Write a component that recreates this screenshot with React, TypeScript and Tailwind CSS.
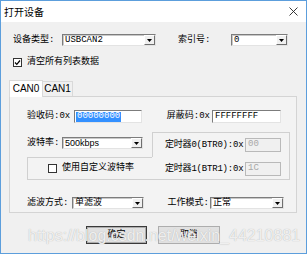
import React from "react";

interface ComboProps {
  value: string;
  className: string;
  sans?: boolean;
}

function DropArrow() {
  return (
    <span className="w-[11px] shrink-0 bg-[#f0f0f0] border border-t-white border-l-white border-r-[#6f6f6f] border-b-[#6f6f6f] flex items-center justify-center">
      <svg width="5" height="3" viewBox="0 0 5 3">
        <path d="M0 0H5L2.5 3Z" fill="#000" />
      </svg>
    </span>
  );
}

function Combo({ value, className, sans }: ComboProps) {
  return (
    <div
      className={`h-[12px] shrink-0 bg-white border border-t-[#7c7c7c] border-l-[#7c7c7c] border-r-[#e3e3e3] border-b-[#e3e3e3] shadow-[inset_1px_1px_0_#c8c8c8] flex items-stretch ${className}`}
    >
      <span
        className={`flex-1 flex items-center pl-[2px] whitespace-nowrap ${
          sans ? "font-['Liberation_Sans','Noto_Sans_CJK_SC',sans-serif] text-[9px]" : ""
        }`}
      >
        {value}
      </span>
      <DropArrow />
    </div>
  );
}

function Edit({ value, className, selected }: { value: string; className: string; selected?: boolean }) {
  return (
    <div
      className={`h-[13px] shrink-0 bg-white border border-t-[#7c7c7c] border-l-[#7c7c7c] border-r-[#e3e3e3] border-b-[#e3e3e3] flex items-center pl-px ${className}`}
    >
      {selected ? (
        <span className="bg-[#3390ff] text-white h-[10px] flex items-center px-px">{value}</span>
      ) : (
        <span className="px-px">{value}</span>
      )}
    </div>
  );
}

function DisabledEdit({ value }: { value: string }) {
  return (
    <div className="w-[36px] h-[14px] shrink-0 bg-[#f0f0f0] border border-[#b9b9b9] text-[#a8a8a8] pl-[2px] pt-px">
      {value}
    </div>
  );
}

function CheckBox({ checked }: { checked?: boolean }) {
  return (
    <span className="w-[9px] h-[9px] shrink-0 bg-white border border-[#333] flex items-center justify-center">
      {checked && (
        <svg width="7" height="7" viewBox="0 0 7 7">
          <path d="M1 3.5L2.8 5.3L6 1.5" fill="none" stroke="#000" strokeWidth="1.2" />
        </svg>
      )}
    </span>
  );
}

export default function App() {
  return (
    <div className="relative w-[307px] h-[254px] border border-[#5c9edc] bg-[#f0f0f0] flex flex-col overflow-hidden text-black text-[9px] leading-none font-['Liberation_Mono','Noto_Sans_CJK_SC',monospace]">
      {/* title bar */}
      <div className="h-[21px] shrink-0 bg-white flex items-center justify-between pl-[3px] pr-[8px]">
        <span className="font-['Noto_Sans_CJK_SC',sans-serif] text-[10px]">打开设备</span>
        <svg width="9" height="9" viewBox="0 0 9 9">
          <path d="M0.5 0.5L8.5 8.5M8.5 0.5L0.5 8.5" stroke="#222" strokeWidth="0.9" />
        </svg>
      </div>

      {/* device row */}
      <div className="mt-[12px] h-[12px] flex items-center pl-[12px]">
        <span className="w-[49px]">设备类型:</span>
        <Combo value="USBCAN2" className="w-[94px]" />
        <span className="ml-[22px] w-[53px]">索引号:</span>
        <Combo value="0" className="w-[57px]" />
      </div>

      <div className="mt-[12px] h-[9px] flex items-center gap-[5px] pl-[12px]">
        <CheckBox checked />
        <span>清空所有列表数据</span>
      </div>

      {/* tabs */}
      <div className="mt-[13px] h-[17px] flex items-end pl-[8px] font-['Liberation_Sans',sans-serif] text-[10px]">
        <div className="relative z-10 w-[34px] h-[17px] bg-white border border-b-0 border-[#d9d9d9] flex items-center justify-center">
          CAN0
        </div>
        <div className="w-[30px] h-[15px] mb-px bg-[#f0f0f0] border-t border-r border-[#d9d9d9] flex items-center justify-center">
          CAN1
        </div>
      </div>

      {/* tab page */}
      <div className="-mt-px ml-[8px] w-[288px] h-[117px] border border-[#d4d4d4] bg-[#f3f3f3] flex flex-col">
        <div className="mt-[13px] h-[13px] flex items-center justify-between pl-[17px] pr-[15px]">
          <div className="flex items-center">
            <span className="w-[47px]">验收码:0x</span>
            <Edit value="00000000" className="w-[68px]" selected />
          </div>
          <div className="flex items-center gap-[2px]">
            <span>屏蔽码:0x</span>
            <Edit value="FFFFFFFF" className="w-[69px]" />
          </div>
        </div>

        {/* baud rate + custom group */}
        <div className="mt-[9px] ml-[17px] w-[263px] flex flex-col">
          <div className="h-[25px] flex">
            <div className="w-[125px] pt-[5px] flex items-start">
              <span className="w-[35px] h-[12px] flex items-center">波特率:</span>
              <Combo value="500kbps" className="w-[81px]" sans />
            </div>
            <div className="flex-1 border-l border-t border-r border-[#d0d0d0] pl-[12px] pr-[8px] pt-[5px] flex items-start justify-between">
              <span className="h-[14px] flex items-center whitespace-nowrap tracking-[-0.2px]">定时器0(BTR0):0x</span>
              <DisabledEdit value="00" />
            </div>
          </div>
          <div className="h-[23px] flex">
            <div className="w-[125px] border-l border-t border-b border-[#d0d0d0] pl-[20px] flex items-center gap-[5px]">
              <CheckBox />
              <span>使用自定义波特率</span>
            </div>
            <div className="flex-1 border-r border-b border-[#d0d0d0] pl-[13px] pr-[8px] pt-[5px] flex items-start justify-between">
              <span className="h-[14px] flex items-center whitespace-nowrap tracking-[-0.2px]">定时器1(BTR1):0x</span>
              <DisabledEdit value="1C" />
            </div>
          </div>
        </div>

        <div className="mt-[17px] h-[12px] flex items-center justify-between pl-[17px] pr-[12px]">
          <div className="flex items-center">
            <span className="w-[45px] whitespace-nowrap">滤波方式:</span>
            <Combo value="单滤波" className="w-[72px]" />
          </div>
          <div className="flex items-center gap-px">
            <span className="whitespace-nowrap">工作模式:</span>
            <Combo value="正常" className="w-[74px]" />
          </div>
        </div>
      </div>

      {/* buttons */}
      <div className="mt-[13px] h-[18px] flex pl-[85px] gap-[11px]">
        <button className="w-[61px] h-[18px] bg-[#e1e1e1] border border-[#3a3a3a] shadow-[inset_0_0_0_1px_#adadad] text-[9px] flex items-center justify-center">
          确定
        </button>
        <button className="w-[62px] h-[18px] bg-[#e1e1e1] border border-[#adadad] text-[9px] flex items-center justify-center">
          取消
        </button>
      </div>

      {/* watermark */}
      <div className="absolute left-[27px] top-[227px] font-['Liberation_Sans',sans-serif] text-[16px] leading-none text-[#f8f8f8]/90 [text-shadow:0_0_1px_#a8a8a8] pointer-events-none whitespace-nowrap">
        https://blog.csdn.net/weixin_44210881
      </div>
    </div>
  );
}
